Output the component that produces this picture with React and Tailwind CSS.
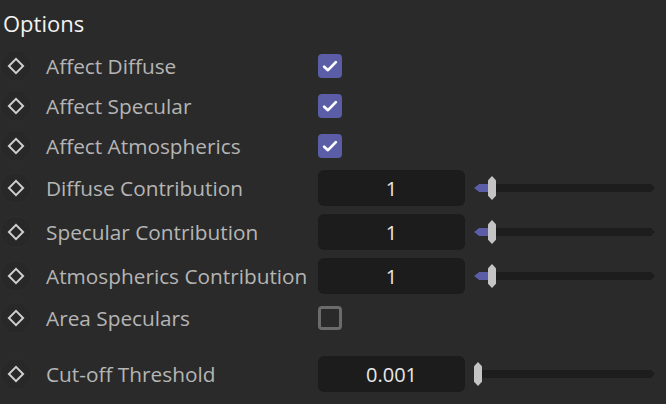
import React from "react";

const rows = [
  { label: "Affect Diffuse", type: "check", checked: true },
  { label: "Affect Specular", type: "check", checked: true },
  { label: "Affect Atmospherics", type: "check", checked: true },
  { label: "Diffuse Contribution", type: "value", value: "1", pos: 14 },
  { label: "Specular Contribution", type: "value", value: "1", pos: 14 },
  { label: "Atmospherics Contribution", type: "value", value: "1", pos: 14 },
  { label: "Area Speculars", type: "check", checked: false },
  { label: "Cut-off Threshold", type: "value", value: "0.001", pos: 0, gap: true },
];

const Keyframe = () => (
  <div className="w-8 h-8 shrink-0 rounded-full bg-[#282828] border border-[#2e2e2e] flex items-center justify-center">
    <div className="w-3 h-3 rotate-45 border-2 border-[#cfcfcf]" />
  </div>
);

const Checkbox = ({ checked }) =>
  checked ? (
    <div className="w-6 h-6 rounded-[4px] bg-[#5b5ea7] flex items-center justify-center">
      <svg width="18" height="18" viewBox="0 0 16 16" fill="none">
        <path d="M2.8 8.6l3.4 3.1L13.2 4.6" stroke="#ffffff" strokeWidth="2.4" strokeLinecap="round" strokeLinejoin="round" />
      </svg>
    </div>
  ) : (
    <div className="w-6 h-6 rounded-[4px] border-[3px] border-[#6b6b6b]" />
  );

const Slider = ({ pos }) => (
  <div className="relative w-[181px] h-6 flex items-center">
    <div className="w-full h-2 bg-[#1d1d1d] [clip-path:polygon(4px_0,calc(100%-4px)_0,100%_50%,calc(100%-4px)_100%,4px_100%,0_50%)]" />
    {pos > 0 && (
      <div
        className="absolute left-0 h-2 bg-[#5b5ea7] [clip-path:polygon(5px_0,100%_0,100%_100%,5px_100%,0_50%)]"
        style={{ width: pos + 2 }}
      />
    )}
    <div
      className="absolute top-0 w-2 h-6 bg-[#c4c4c4] [clip-path:polygon(50%_0,100%_18%,100%_82%,50%_100%,0_82%,0_18%)]"
      style={{ left: pos }}
    />
  </div>
);

export default function App() {
  return (
    <div className="w-[666px] h-[404px] bg-[#2a2a2a] overflow-hidden font-['Open_Sans','Noto_Sans',sans-serif]">
      <div className="h-[46px] flex items-center pl-[3px] text-[22px] text-[#f2f2f2]">Options</div>
      {rows.map((r) => (
        <div
          key={r.label}
          className={`flex items-center ${r.type === "value" ? "h-11" : "h-10"} ${r.gap ? "mt-[14px]" : ""}`}
        >
          <Keyframe />
          <div className="w-[286px] pl-[14px] pt-[2px] text-[20.8px] text-[#b5b5b5] whitespace-nowrap">
            {r.label}
          </div>
          {r.type === "check" ? (
            <Checkbox checked={r.checked} />
          ) : (
            <div className="flex items-center gap-[9px]">
              <div className="w-[147px] h-9 rounded-[6px] bg-[#1c1c1c] flex items-center justify-center pt-[1px] text-[20px] text-[#e8e8e8]">
                {r.value}
              </div>
              <Slider pos={r.pos} />
            </div>
          )}
        </div>
      ))}
    </div>
  );
}
